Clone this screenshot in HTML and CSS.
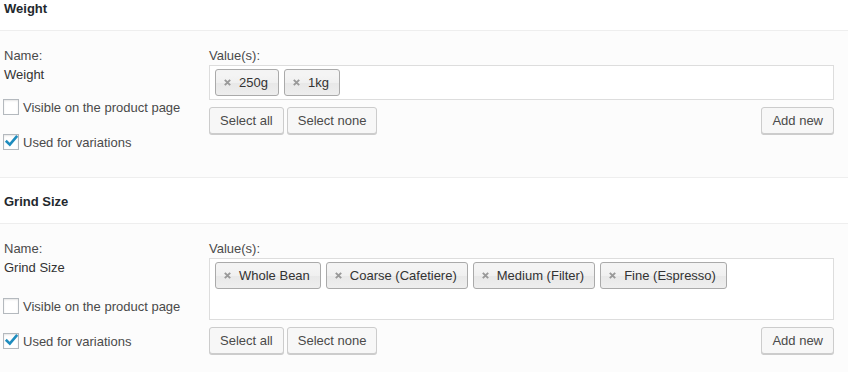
FILE: index.html
```html
<!DOCTYPE html>
<html lang="en">
<head>
<meta charset="utf-8">
<title>Product attributes</title>
<link rel="stylesheet" href="styles.css">
</head>
<body>
<div class="attrs">
  <section class="attr">
    <h3 class="attr-head">Weight</h3>
    <div class="attr-body">
      <div class="col-name">
        <span class="lbl">Name:</span>
        <strong class="name">Weight</strong>
        <label class="check"><span class="box"></span><span>Visible on the product page</span></label>
        <label class="check"><span class="box"><svg viewBox="0 0 16 16" width="16" height="16"><path d="M2.8 6.8 L6.8 10.6 L14.2 1.8" fill="none" stroke="#1e8cbe" stroke-width="2.6"/></svg></span><span>Used for variations</span></label>
      </div>
      <div class="col-values">
        <span class="lbl">Value(s):</span>
        <div class="select">
          <span class="token"><svg class="x" viewBox="0 0 7 7" width="7" height="7"><path d="M0.8 0.8 L6.2 6.2 M6.2 0.8 L0.8 6.2" stroke="#999" stroke-width="1.9"/></svg>250g</span>
          <span class="token"><svg class="x" viewBox="0 0 7 7" width="7" height="7"><path d="M0.8 0.8 L6.2 6.2 M6.2 0.8 L0.8 6.2" stroke="#999" stroke-width="1.9"/></svg>1kg</span>
          <span class="search"></span>
        </div>
        <div class="actions">
          <button class="btn" type="button">Select all</button>
          <button class="btn" type="button">Select none</button>
          <button class="btn btn-add" type="button">Add new</button>
        </div>
      </div>
    </div>
  </section>
  <section class="attr">
    <h3 class="attr-head">Grind Size</h3>
    <div class="attr-body attr-body--tall">
      <div class="col-name">
        <span class="lbl">Name:</span>
        <strong class="name">Grind Size</strong>
        <label class="check"><span class="box"></span><span>Visible on the product page</span></label>
        <label class="check"><span class="box"><svg viewBox="0 0 16 16" width="16" height="16"><path d="M2.8 6.8 L6.8 10.6 L14.2 1.8" fill="none" stroke="#1e8cbe" stroke-width="2.6"/></svg></span><span>Used for variations</span></label>
      </div>
      <div class="col-values">
        <span class="lbl">Value(s):</span>
        <div class="select">
          <span class="token"><svg class="x" viewBox="0 0 7 7" width="7" height="7"><path d="M0.8 0.8 L6.2 6.2 M6.2 0.8 L0.8 6.2" stroke="#999" stroke-width="1.9"/></svg>Whole Bean</span>
          <span class="token"><svg class="x" viewBox="0 0 7 7" width="7" height="7"><path d="M0.8 0.8 L6.2 6.2 M6.2 0.8 L0.8 6.2" stroke="#999" stroke-width="1.9"/></svg>Coarse (Cafetiere)</span>
          <span class="token"><svg class="x" viewBox="0 0 7 7" width="7" height="7"><path d="M0.8 0.8 L6.2 6.2 M6.2 0.8 L0.8 6.2" stroke="#999" stroke-width="1.9"/></svg>Medium (Filter)</span>
          <span class="token"><svg class="x" viewBox="0 0 7 7" width="7" height="7"><path d="M0.8 0.8 L6.2 6.2 M6.2 0.8 L0.8 6.2" stroke="#999" stroke-width="1.9"/></svg>Fine (Espresso)</span>
          <span class="search"></span>
        </div>
        <div class="actions">
          <button class="btn" type="button">Select all</button>
          <button class="btn" type="button">Select none</button>
          <button class="btn btn-add" type="button">Add new</button>
        </div>
      </div>
    </div>
  </section>
</div>
</body>
</html>
```

FILE: styles.css
```css
* { box-sizing: border-box; }

html, body {
  margin: 0;
  padding: 0;
  background: #fcfcfc;
}

body {
  font-family: "Liberation Sans", Arial, sans-serif;
  font-size: 13px;
  color: #4a4a4a;
  overflow: hidden;
}

.attrs {
  margin-top: -15px;
}

.attr-head {
  margin: 0;
  padding: 15px 4px 12px;
  font-size: 13px;
  line-height: 18px;
  font-weight: 700;
  color: #23282d;
  background: #fff;
  border-bottom: 1px solid #eee;
}

.attr-body {
  display: grid;
  grid-template-columns: 205px 1fr;
  padding: 15px 14px 27px 4px;
  background: #fcfcfc;
  border-bottom: 1px solid #eee;
}

.col-name,
.col-values {
  display: flex;
  flex-direction: column;
  align-items: flex-start;
}

.lbl {
  display: block;
  line-height: 19px;
  color: #4a4a4a;
}

.name {
  display: block;
  line-height: 19px;
  font-weight: 400;
  color: #333;
  margin-bottom: 15px;
}

.attr-body--tall .name {
  margin-bottom: 21px;
}

.check {
  display: flex;
  align-items: center;
  gap: 4px;
  height: 16px;
  line-height: 18px;
  color: #4a4a4a;
  margin-left: -1px;
}

.check + .check {
  margin-top: 19px;
}

.check > span:last-child {
  padding-top: 1px;
}

.box {
  width: 16px;
  height: 16px;
  border: 1px solid #b4b9be;
  background: #fff;
  box-shadow: inset 0 1px 2px rgba(0, 0, 0, 0.1);
  position: relative;
  flex: none;
}

.box svg {
  position: absolute;
  left: -1px;
  top: -1px;
}

.select {
  align-self: stretch;
  display: flex;
  flex-wrap: wrap;
  column-gap: 5px;
  padding: 0 5px 3px 5px;
  border: 1px solid #ddd;
  background: #fff;
}

.token {
  display: flex;
  align-items: center;
  height: 27px;
  margin-top: 3px;
  padding: 0 10px 0 8px;
  border: 1px solid #aaa;
  border-radius: 3px;
  background: linear-gradient(#f4f4f4 20%, #f0f0f0 50%, #e8e8e8 52%, #eee);
  color: #333;
  line-height: 25px;
  white-space: nowrap;
}

.token .x {
  flex: none;
  margin-right: 8px;
}

.search {
  flex: 1 1 auto;
  min-width: 120px;
  height: 27px;
}

.actions {
  align-self: stretch;
  display: flex;
  gap: 3px;
  margin-top: 7px;
}

.btn {
  height: 27px;
  margin: 0;
  padding: 0 10px;
  border: 1px solid #ccc;
  border-radius: 3px;
  background: #f7f7f7;
  box-shadow: 0 1px 0 #ccc;
  font-family: inherit;
  font-size: 13px;
  line-height: 25px;
  color: #4a4a4a;
  cursor: pointer;
}

.btn-add {
  margin-left: auto;
}
```
